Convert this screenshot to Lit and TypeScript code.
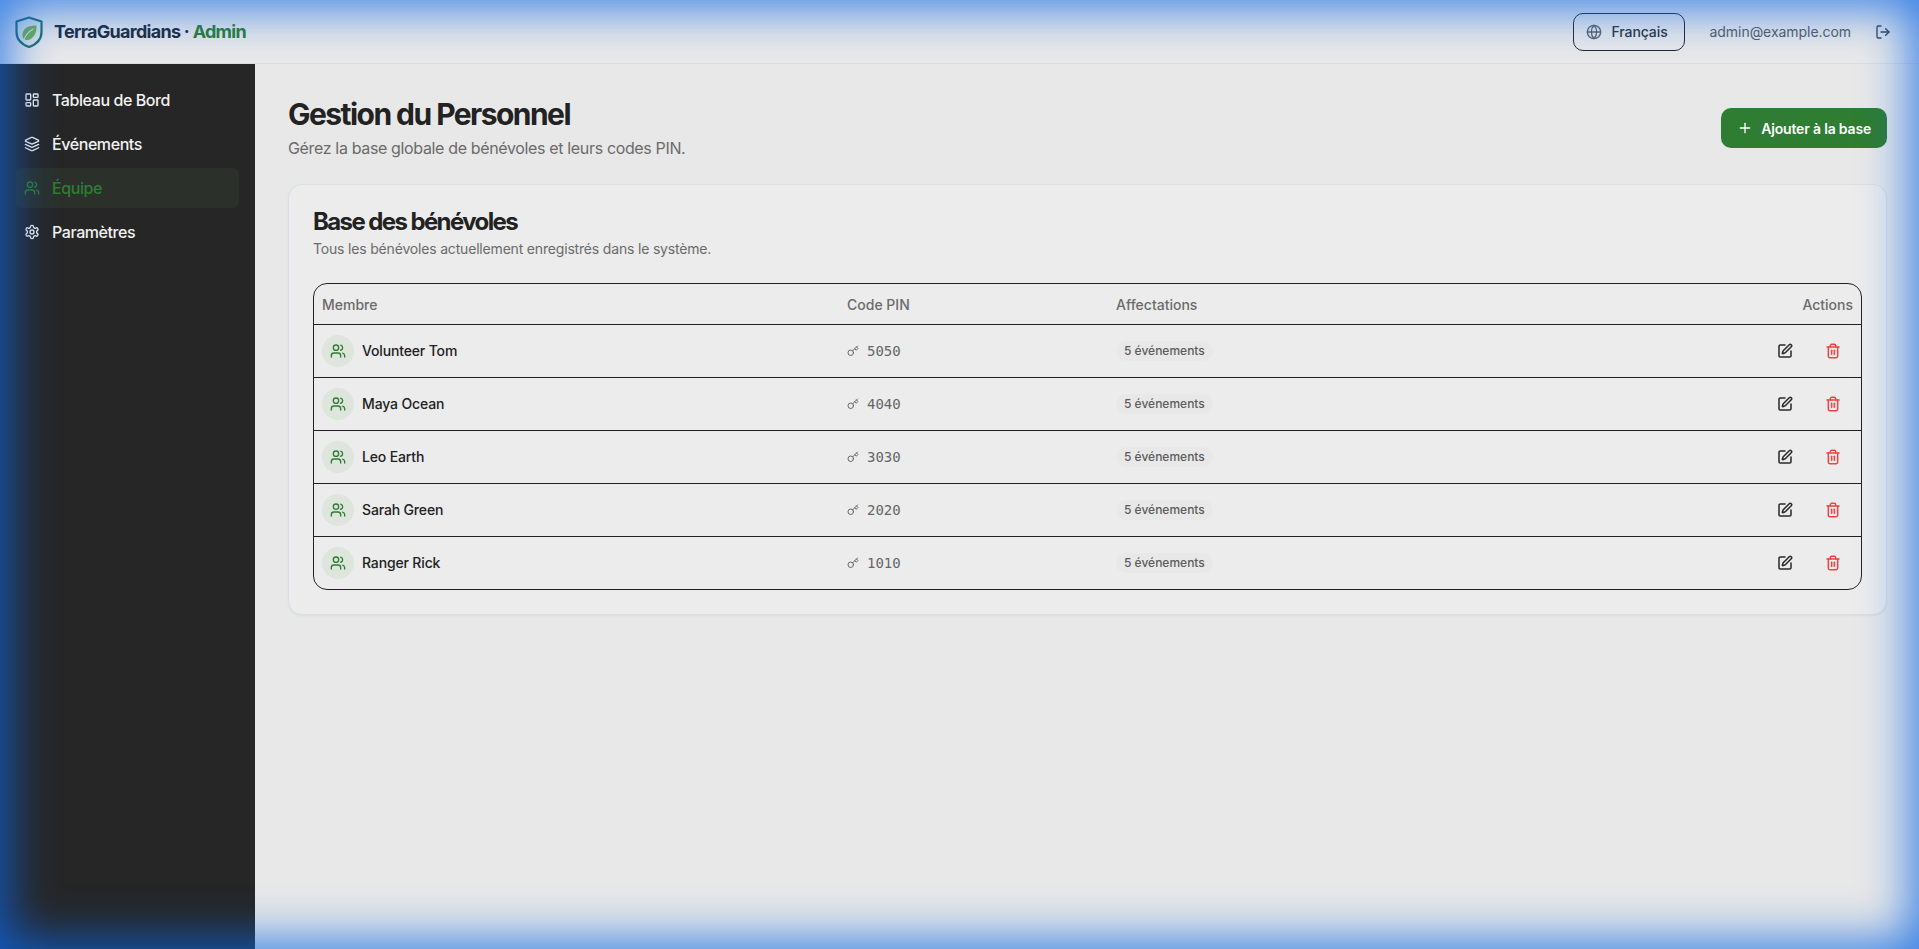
import { LitElement, html, css, svg } from "lit";
import { customElement } from "lit/decorators.js";

const paths: Record<string, unknown> = {
  dash: svg`<rect x="3" y="3" width="7" height="9" rx="1"/><rect x="14" y="3" width="7" height="5" rx="1"/><rect x="14" y="12" width="7" height="9" rx="1"/><rect x="3" y="16" width="7" height="5" rx="1"/>`,
  layers: svg`<path d="m12.83 2.18a2 2 0 0 0-1.66 0L2.6 6.08a1 1 0 0 0 0 1.83l8.58 3.91a2 2 0 0 0 1.66 0l8.58-3.9a1 1 0 0 0 0-1.83Z"/><path d="m22 17.65-9.17 4.16a2 2 0 0 1-1.66 0L2 17.65"/><path d="m22 12.65-9.17 4.16a2 2 0 0 1-1.66 0L2 12.65"/>`,
  users: svg`<path d="M16 21v-2a4 4 0 0 0-4-4H6a4 4 0 0 0-4 4v2"/><circle cx="9" cy="7" r="4"/><path d="M22 21v-2a4 4 0 0 0-3-3.87"/><path d="M16 3.13a4 4 0 0 1 0 7.75"/>`,
  settings: svg`<path d="M12.22 2h-.44a2 2 0 0 0-2 2v.18a2 2 0 0 1-1 1.73l-.43.25a2 2 0 0 1-2 0l-.15-.08a2 2 0 0 0-2.73.73l-.22.38a2 2 0 0 0 .73 2.73l.15.1a2 2 0 0 1 1 1.72v.51a2 2 0 0 1-1 1.74l-.15.09a2 2 0 0 0-.73 2.73l.22.38a2 2 0 0 0 2.73.73l.15-.08a2 2 0 0 1 2 0l.43.25a2 2 0 0 1 1 1.73V20a2 2 0 0 0 2 2h.44a2 2 0 0 0 2-2v-.18a2 2 0 0 1 1-1.73l.43-.25a2 2 0 0 1 2 0l.15.08a2 2 0 0 0 2.73-.73l.22-.39a2 2 0 0 0-.73-2.73l-.15-.08a2 2 0 0 1-1-1.74v-.5a2 2 0 0 1 1-1.74l.15-.09a2 2 0 0 0 .73-2.73l-.22-.38a2 2 0 0 0-2.73-.73l-.15.08a2 2 0 0 1-2 0l-.43-.25a2 2 0 0 1-1-1.73V4a2 2 0 0 0-2-2z"/><circle cx="12" cy="12" r="3"/>`,
  globe: svg`<circle cx="12" cy="12" r="10"/><path d="M12 2a14.5 14.5 0 0 0 0 20 14.5 14.5 0 0 0 0-20"/><path d="M2 12h20"/>`,
  logout: svg`<path d="M9 21H5a2 2 0 0 1-2-2V5a2 2 0 0 1 2-2h4"/><path d="m16 17 5-5-5-5"/><path d="M21 12H9"/>`,
  plus: svg`<path d="M5 12h14"/><path d="M12 5v14"/>`,
  key: svg`<path d="m15.5 7.5 2.3 2.3a1 1 0 0 0 1.4 0l2.1-2.1a1 1 0 0 0 0-1.4L19 4"/><path d="m21 2-9.6 9.6"/><circle cx="7.5" cy="15.5" r="5.5"/>`,
  pen: svg`<path d="M12 3H5a2 2 0 0 0-2 2v14a2 2 0 0 0 2 2h14a2 2 0 0 0 2-2v-7"/><path d="M18.375 2.625a1 1 0 0 1 3 3l-9.013 9.014a2 2 0 0 1-.853.505l-2.873.84a.5.5 0 0 1-.62-.62l.84-2.873a2 2 0 0 1 .506-.852z"/>`,
  trash: svg`<path d="M3 6h18"/><path d="M19 6v14c0 1-1 2-2 2H7c-1 0-2-1-2-2V6"/><path d="M8 6V4c0-1 1-2 2-2h4c1 0 2 1 2 2v2"/><line x1="10" x2="10" y1="11" y2="17"/><line x1="14" x2="14" y1="11" y2="17"/>`,
};

const icon = (name: string, size = 16) => html`<svg class="ic" width=${size} height=${size} viewBox="0 0 24 24" fill="none" stroke="currentColor" stroke-width="2" stroke-linecap="round" stroke-linejoin="round">${paths[name]}</svg>`;

const nav = [
  { label: "Tableau de Bord", icon: "dash" },
  { label: "Événements", icon: "layers" },
  { label: "Équipe", icon: "users", active: true },
  { label: "Paramètres", icon: "settings" },
];
const people = [
  ["Volunteer Tom", "5050"],
  ["Maya Ocean", "4040"],
  ["Leo Earth", "3030"],
  ["Sarah Green", "2020"],
  ["Ranger Rick", "1010"],
];

@customElement("app-root")
export class AppRoot extends LitElement {
  static styles = css`
    :host { display: block; height: 100vh; overflow: hidden; position: relative; font-family: Inter, "Noto Sans", sans-serif; color: #222; background: #e8e8e8; }
    * { box-sizing: border-box; }
    .ic { display: block; flex: none; }
    .top { height: 64px; display: flex; align-items: center; padding: 0 16px 0 15px; border-bottom: 1px solid #d9dfe9; background: #e9e9e9; }
    .brand { display: flex; align-items: center; gap: 11px; font-size: 18px; font-weight: 700; letter-spacing: -0.72px; color: #1e293b; flex: 1; }
    .brand b { color: #2e7d32; font-weight: 700; }
    .lang { display: flex; align-items: center; gap: 10px; height: 38px; width: 112px; padding: 0 11px; border: 1px solid #1e293b; border-radius: 10px; font-size: 14px; font-weight: 500; letter-spacing: -0.1px; color: #2b3444; margin-right: 25px; }
    .lang .ic { color: #5a6270; margin-left: 1px; }
    .email { font-size: 14px; letter-spacing: -0.05px; color: #555c6b; margin-right: 24px; }
    .logout { color: #3a4252; margin-right: 12px; }
    .body { display: flex; height: calc(100vh - 64px); }
    .side { width: 255px; flex: none; background: #262626; padding: 16px; display: flex; flex-direction: column; gap: 4px; }
    .item { height: 40px; display: flex; align-items: center; gap: 12px; padding: 0 8px; border-radius: 6px; color: #f2f2f2; font-size: 16px; font-weight: 500; letter-spacing: -0.42px; }
    .item.on { background: #2b302b; color: #2e7d32; }
    .main { flex: 1; min-width: 0; padding: 32px 32px 32px 33px; }
    .head { display: flex; align-items: flex-start; justify-content: space-between; margin-bottom: 24px; }
    h1 { margin: 0; font-size: 30px; line-height: 36px; font-weight: 700; letter-spacing: -1.55px; color: #222; }
    .sub { margin: 4px 0 0; font-size: 16px; line-height: 24px; letter-spacing: -0.35px; color: #6b6b6b; }
    .add { display: flex; align-items: center; gap: 8px; height: 40px; margin-top: 12px; padding: 0 16px; border-radius: 10px; background: #2e7d32; color: #fff; font-size: 14px; font-weight: 600; letter-spacing: -0.18px; }
    .card { background: #ececec; border: 1px solid #d9dfe9; border-radius: 14px; padding: 24px; box-shadow: 0 1px 2px rgba(0,0,0,.05); }
    h2 { margin: 0; font-size: 24px; line-height: 26px; font-weight: 700; letter-spacing: -1.6px; color: #222; }
    .desc { margin: 4px 0 0; font-size: 14px; line-height: 20px; letter-spacing: -0.18px; color: #6b6b6b; }
    .table { margin-top: 24px; border: 1px solid #222; border-radius: 14px; overflow: hidden; }
    .row { display: grid; grid-template-columns: 525px 269px 1fr 120px; align-items: center; padding: 0 8px; height: 53px; border-bottom: 1px solid #222; font-size: 14px; }
    .row:last-child { border-bottom: 0; height: 52px; }
    .row.hd { height: 41px; font-weight: 500; color: #6b6b6b; }
    .right { text-align: right; }
    .who { display: flex; align-items: center; gap: 8px; font-weight: 500; letter-spacing: -0.15px; color: #222; }
    .who .name { padding-bottom: 1px; }
    .av { width: 32px; height: 32px; border-radius: 50%; background: #dde5dd; color: #2e7d32; display: flex; align-items: center; justify-content: center; }
    .pin { display: flex; align-items: center; gap: 8px; font-family: "DejaVu Sans Mono", monospace; font-size: 14px; color: #666; }
    .badge { display: inline-block; height: 20px; padding: 0 8px; border-radius: 10px; background: #e8e8e8; font-size: 12px; line-height: 20px; font-weight: 500; color: #5c5c5c; }
    .acts { display: flex; justify-content: flex-end; align-items: center; gap: 32px; padding-right: 12px; color: #2a2a2a; }
    .acts .ic { stroke-width: 2.3; }
    .del { color: #ef4444; }
    .glow { position: absolute; inset: 0; pointer-events: none; box-shadow: inset 0 0 48px 8px rgba(13, 102, 228, .82); }
  `;

  render() {
    return html`
      <div class="top">
        <div class="brand">
          <svg width="28" height="32" viewBox="0 0 28 32">
            <path d="M14 1.500 26.500 5.500V16c0 7.500-5.500 12.500-12.500 15C7 28.500 1.500 23.500 1.500 16V5.500Z" fill="#e4ebe4" stroke="#1f6e66" stroke-width="2.2" stroke-linejoin="round"/>
            <path d="M21.500 9.500C13 9 7 13 7.500 20c.2 2 1.500 3.500 3.500 4 6.500 .5 11-6 10.500-14.500Z" fill="#7cb342"/>
            <path d="M8.500 25C10 20 13 16 18 13" fill="none" stroke="#e4ebe4" stroke-width="1.100" stroke-linecap="round"/>
          </svg>
          <span>TerraGuardians · <b>Admin</b></span>
        </div>
        <div class="lang">${icon("globe")}<span>Français</span></div>
        <span class="email">admin@example.com</span>
        <span class="logout">${icon("logout")}</span>
      </div>
      <div class="body">
        <nav class="side">
          ${nav.map((n) => html`<div class="item ${n.active ? "on" : ""}">${icon(n.icon)}<span>${n.label}</span></div>`)}
        </nav>
        <main class="main">
          <div class="head">
            <div>
              <h1>Gestion du Personnel</h1>
              <p class="sub">Gérez la base globale de bénévoles et leurs codes PIN.</p>
            </div>
            <div class="add">${icon("plus")}<span>Ajouter à la base</span></div>
          </div>
          <section class="card">
            <h2>Base des bénévoles</h2>
            <p class="desc">Tous les bénévoles actuellement enregistrés dans le système.</p>
            <div class="table">
              <div class="row hd"><span>Membre</span><span>Code PIN</span><span>Affectations</span><span class="right">Actions</span></div>
              ${people.map(([name, pin]) => html`
                <div class="row">
                  <div class="who"><span class="av">${icon("users")}</span><span class="name">${name}</span></div>
                  <div class="pin">${icon("key", 12)}<span>${pin}</span></div>
                  <div><span class="badge">5 événements</span></div>
                  <div class="acts">${icon("pen")}<span class="del">${icon("trash")}</span></div>
                </div>`)}
            </div>
          </section>
        </main>
      </div>
      <div class="glow"></div>
    `;
  }
}
